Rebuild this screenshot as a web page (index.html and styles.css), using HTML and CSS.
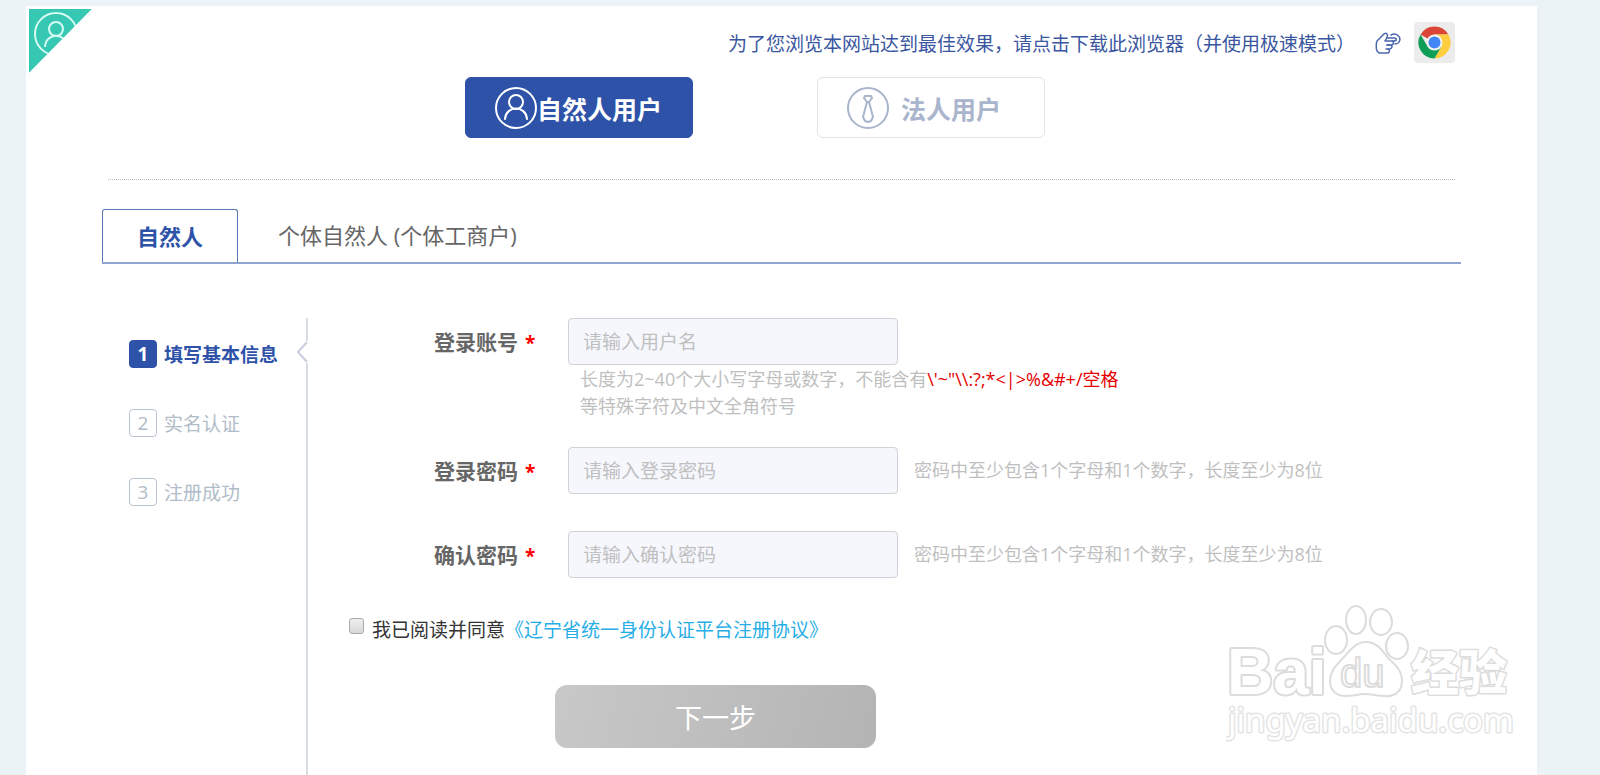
FILE: index.html
```html
<!DOCTYPE html>
<html lang="zh-CN">
<head>
    <meta charset="UTF-8">
    <title>用户注册</title>
    <link rel="stylesheet" href="styles.css">
</head>
<body>
    <div class="panel">
        <svg class="corner" viewBox="0 0 63 64" aria-hidden="true">
            <defs>
                <clipPath id="cornerClip"><path d="M0 0H63L0 64Z"/></clipPath>
            </defs>
            <g clip-path="url(#cornerClip)">
                <path d="M0 0H63L0 64Z" fill="#37c8b4"/>
                <g fill="none" stroke="#d5fbf3" stroke-width="2">
                    <circle cx="27" cy="25" r="21"/>
                    <circle cx="27" cy="20" r="7"/>
                    <path d="M16 38C17 23 37 23 38 38"/>
                </g>
            </g>
        </svg>

        <header class="header">
            <div class="notice">
                <a href="#" class="notice-link">为了您浏览本网站达到最佳效果，请点击下载此浏览器（并使用极速模式）</a>
                <svg class="hand" viewBox="0 0 26 22" aria-hidden="true">
                    <g fill="none" stroke="#4a66ad" stroke-width="1.500" stroke-linejoin="round" stroke-linecap="round">
                        <path d="M19 9H10C12 6 13 3 12 2C10 0 8 3 6 5L2 9C1 11 1 17 2 19L4 21H13C15 20 15 18 13 17"/>
                        <path d="M12 13H16C18 14 17 17 14 17H11"/>
                        <path d="M12 13H17C19 12 19 10 17 9"/>
                        <path d="M12 6H19C22 6 22 9 19 9"/>
                        <path d="M16 3C21 0 27 5 24 10C23 12 21 12 20 12"/>
                    </g>
                </svg>
                <svg class="chrome" viewBox="0 0 41 41" aria-hidden="true">
                    <rect width="41" height="41" rx="4" fill="#ececec"/>
                    <path d="M20.500 20.500L6.600 12.500A16 16 0 0 1 34.400 12.500L20.500 12.500Z" fill="#db4437"/>
                    <path d="M20.500 12.500H34.400A16 16 0 0 1 20.500 36.500L27.400 24.500Z" fill="#ffcd40"/>
                    <path d="M6.600 12.500A16 16 0 0 0 20.500 36.500L27.400 24.500L13.600 24.500Z" fill="#0f9d58"/>
                    <circle cx="20.500" cy="20.500" r="8" fill="#f4f4f4"/>
                    <circle cx="20.500" cy="20.500" r="6" fill="#4285f4"/>
                </svg>
            </div>
            <div class="user-types">
                <button type="button" class="user-type active">
                    <svg class="type-icon" viewBox="0 0 42 42" aria-hidden="true">
                        <g fill="none" stroke="currentColor" stroke-width="2" stroke-linecap="round">
                            <circle cx="21" cy="21" r="20"/>
                            <circle cx="21" cy="15" r="7"/>
                            <path d="M10 32C11 18 31 18 32 32"/>
                        </g>
                    </svg>
                    <span>自然人用户</span>
                </button>
                <button type="button" class="user-type">
                    <svg class="type-icon" viewBox="0 0 42 42" aria-hidden="true">
                        <g fill="none" stroke="currentColor" stroke-width="2" stroke-linejoin="round">
                            <circle cx="21" cy="21" r="20"/>
                            <path d="M18 9H24L25 11L22 15H20L17 11ZM20 15L16 30L18 34L21 35L24 34L26 30L22 15"/>
                        </g>
                    </svg>
                    <span>法人用户</span>
                </button>
            </div>
        </header>

        <nav class="tabs">
            <a href="#" class="tab active">自然人</a>
            <a href="#" class="tab">个体自然人 (个体工商户)</a>
        </nav>

        <main class="main">
            <ol class="steps">
                <li class="step active"><span class="num">1</span>填写基本信息
                    <svg class="arrow" viewBox="0 0 12 22" aria-hidden="true">
                        <path d="M11 0V22" stroke="#fff" stroke-width="2"/>
                        <path d="M11 1L2 11L11 21" fill="none" stroke="#c9cfdf" stroke-width="2"/>
                    </svg>
                </li>
                <li class="step"><span class="num">2</span>实名认证</li>
                <li class="step"><span class="num">3</span>注册成功</li>
            </ol>

            <form class="form">
                <div class="row">
                    <label for="account">登录账号<span class="star">*</span></label>
                    <input type="text" id="account" class="text-input" placeholder="请输入用户名">
                    <p class="hint below">长度为2~40个大小写字母或数字，不能含有<span class="red">\'~"\\:?;*&lt;|&gt;%&amp;#+/空格</span><br>等特殊字符及中文全角符号</p>
                </div>
                <div class="row">
                    <label for="password">登录密码<span class="star">*</span></label>
                    <input type="password" id="password" class="text-input" placeholder="请输入登录密码">
                    <p class="hint">密码中至少包含1个字母和1个数字，长度至少为8位</p>
                </div>
                <div class="row">
                    <label for="confirm">确认密码<span class="star">*</span></label>
                    <input type="password" id="confirm" class="text-input" placeholder="请输入确认密码">
                    <p class="hint">密码中至少包含1个字母和1个数字，长度至少为8位</p>
                </div>
                <div class="agree">
                    <input type="checkbox" id="agree">
                    <label for="agree">我已阅读并同意</label><a href="#">《辽宁省统一身份认证平台注册协议》</a>
                </div>
                <button type="submit" class="next">下一步</button>
            </form>
        </main>
    </div>

    <svg class="watermark" viewBox="0 0 290 150" role="img" aria-label="Baidu 经验">
        <g class="wm-shapes">
            <text x="1" y="90" class="wm-brand">Bai</text>
            <text x="185" y="86" class="wm-cn">经验</text>
            <ellipse cx="110" cy="36" rx="11" ry="14"/>
            <ellipse cx="130" cy="16" rx="10" ry="14"/>
            <ellipse cx="155" cy="18" rx="11" ry="13"/>
            <ellipse cx="171" cy="42" rx="11" ry="13"/>
            <path d="M140 38C152 38 157 48 163 55C170 61 176 67 176 77C176 88 168 93 159 92C150 92 146 90 139 90C132 90 128 92 120 92C111 92 104 87 104 77C104 67 110 62 116 55C123 48 129 38 140 38Z"/>
            <text x="114" y="83" class="wm-du">du</text>
            <text x="2" y="128" class="wm-url">jingyan.baidu.com</text>
        </g>
    </svg>
</body>
</html>
```
FILE: styles.css
```css
* {
    box-sizing: border-box;
}

body {
    margin: 0;
    padding: 6px 63px 0 26px;
    background: #ebf3f7;
    font-family: "Open Sans", "Noto Sans CJK SC", sans-serif;
    color: #333;
}

button, input {
    font-family: inherit;
}

a {
    text-decoration: none;
}

.panel {
    position: relative;
    display: flex;
    flex-direction: column;
    min-height: calc(100vh - 6px);
    background: #fff;
}

.corner {
    position: absolute;
    left: 3px;
    top: 3px;
    width: 63px;
    height: 64px;
}

/* header */
.header {
    margin: 0 82px;
    padding: 16px 0 41px;
    border-bottom: 1px dotted #b4c0c8;
}

.notice {
    display: flex;
    align-items: center;
    justify-content: flex-end;
    height: 41px;
    margin-bottom: 14px;
}

.notice-link {
    font-size: 19px;
    color: #3a56a0;
}

.hand {
    width: 26px;
    height: 22px;
    margin: 0 13px 0 20px;
}

.chrome {
    width: 41px;
    height: 41px;
}

.user-types {
    display: flex;
    justify-content: center;
    gap: 124px;
    padding-right: 53px;
}

.user-type {
    display: flex;
    align-items: center;
    gap: 12px;
    width: 228px;
    height: 61px;
    padding: 0 0 0 29px;
    border: 1px solid #e0e4ea;
    border-radius: 6px;
    background: #fff;
    font-size: 25px;
    font-weight: bold;
    color: #a9b4cd;
}

.user-type.active {
    gap: 0;
    border-color: #2d52a8;
    background: #2d52a8;
    color: #fff;
}

.type-icon {
    width: 42px;
    height: 42px;
}

/* tabs */
.tabs {
    display: flex;
    margin: 29px 76px 0;
    border-bottom: 2px solid #8fa5cf;
}

.tab {
    padding: 0 40px;
    line-height: 52px;
    font-size: 22px;
    color: #666;
}

.tab.active {
    padding: 0 34px;
    border: 1px solid #5a76b4;
    border-bottom: 0;
    border-radius: 3px 3px 0 0;
    font-weight: bold;
    color: #2d52a8;
}

.main {
    flex: 1;
    display: flex;
    margin: 54px 76px 0;
}

/* steps */
.steps {
    display: flex;
    flex-direction: column;
    gap: 41px;
    width: 206px;
    margin: 0;
    padding: 22px 0 0 27px;
    border-right: 2px solid #d9dee4;
    list-style: none;
}

.step {
    position: relative;
    display: flex;
    align-items: center;
    gap: 7px;
    height: 28px;
    font-size: 19px;
    color: #b0bcc8;
}

.step.active {
    font-weight: bold;
    color: #2d52a8;
}

.num {
    width: 28px;
    height: 28px;
    border: 1px solid #b9c4ce;
    border-radius: 4px;
    line-height: 26px;
    text-align: center;
}

.step.active .num {
    border-color: #2d52a8;
    background: #2d52a8;
    color: #fff;
}

.arrow {
    position: absolute;
    right: -2px;
    top: 1px;
    width: 12px;
    height: 22px;
}

/* form */
.form {
    flex: 1;
    padding-left: 41px;
}

.row {
    display: grid;
    grid-template-columns: 134px 330px 1fr;
    align-items: center;
    margin: 0 0 37px 85px;
}

.row:first-child {
    margin-bottom: 27px;
}

.row label {
    padding-bottom: 2px;
    font-size: 21px;
    font-weight: bold;
    color: #666;
}

.star {
    margin-left: 7px;
    font-size: 19px;
    color: #f00;
}

.text-input {
    width: 100%;
    height: 47px;
    padding: 0 14px;
    border: 1px solid #d0d2d8;
    border-radius: 4px;
    background: #f6f7fd;
    font-size: 19px;
}

.text-input::placeholder {
    color: #bfbfbf;
}

.hint {
    margin: 0 0 0 16px;
    line-height: 27px;
    font-size: 18px;
    color: #bfbfbf;
}

.hint.below {
    grid-column: 2 / 4;
    margin: 1px 0 0 12px;
}

.red {
    color: #e60000;
}

.agree {
    display: flex;
    align-items: center;
    height: 28px;
    font-size: 19px;
}

.agree input {
    appearance: none;
    width: 15px;
    height: 16px;
    margin: 0 8px 6px 0;
    border: 1px solid #aaa;
    border-radius: 3px;
    background: linear-gradient(#eee, #d8d8d8);
}

.agree input:checked {
    background: #2d52a8;
}

.agree a {
    color: #27aee6;
}

.next {
    display: block;
    width: 321px;
    height: 63px;
    margin: 42px 0 0 206px;
    border: 0;
    border-radius: 12px;
    background: linear-gradient(105deg, #c8c8c8, #b4b4b4);
    font-size: 27px;
    color: #fff;
}

/* watermark */
.watermark {
    position: absolute;
    right: 84px;
    bottom: 21px;
    width: 290px;
    height: 150px;
}

.wm-shapes {
    fill: #fff;
    stroke: #dcdcdc;
    stroke-width: 2px;
    stroke-linejoin: round;
}

.wm-brand {
    font-family: "Liberation Sans", sans-serif;
    font-size: 64px;
    font-weight: bold;
    paint-order: stroke;
    stroke-width: 4px;
}

.wm-cn {
    font-family: "Noto Sans CJK SC", sans-serif;
    font-size: 48px;
    font-weight: 900;
    paint-order: stroke;
    stroke-width: 3px;
}

.wm-du {
    font-family: "Liberation Sans", sans-serif;
    font-size: 40px;
}

.wm-url {
    font-family: "Noto Sans", sans-serif;
    font-size: 33px;
    paint-order: stroke;
    stroke: #e4e4e4;
    stroke-width: 3px;
}
```
